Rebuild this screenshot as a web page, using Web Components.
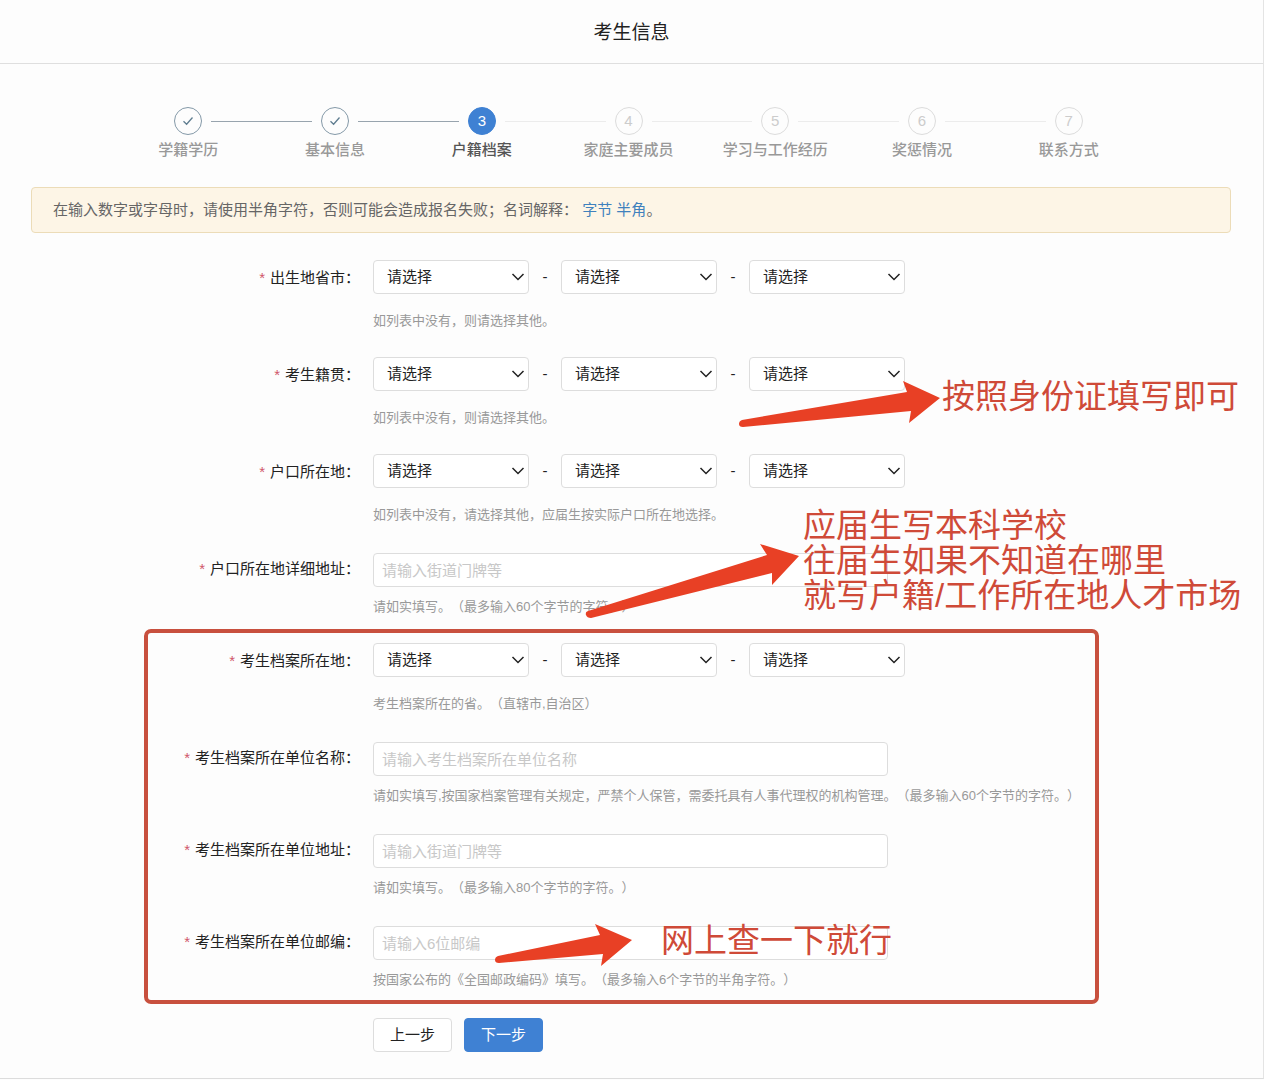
<!DOCTYPE html>
<html lang="zh-CN">
<head>
<meta charset="UTF-8">
<meta name="viewport" content="width=device-width, initial-scale=1.0">
<title>考生信息</title>
<style>
    body {
        margin: 0;
        background-color: #fdfdfd;
        color: #222;
        font-family: "Liberation Sans", "Noto Sans CJK SC", sans-serif;
        font-size: 15px;
        line-height: 20px;
        text-spacing-trim: space-all;
    }
</style>
</head>
<body>

<exam-page heading="考生信息">
    <step-bar current="3" steps="学籍学历,基本信息,户籍档案,家庭主要成员,学习与工作经历,奖惩情况,联系方式"></step-bar>

    <notice-bar>在输入数字或字母时，请使用半角字符，否则可能会造成报名失败；名词解释： <a href="#byte">字节</a> <a href="#half">半角</a>。</notice-bar>

    <region-field label="出生地省市" hint="如列表中没有，则请选择其他。"></region-field>
    <region-field label="考生籍贯" hint="如列表中没有，则请选择其他。"></region-field>
    <region-field label="户口所在地" hint="如列表中没有，请选择其他，应届生按实际户口所在地选择。"></region-field>
    <text-field label="户口所在地详细地址" placeholder="请输入街道门牌等" hint="请如实填写。（最多输入60个字节的字符。）"></text-field>
    <region-field label="考生档案所在地" hint="考生档案所在的省。（直辖市,自治区）"></region-field>
    <text-field label="考生档案所在单位名称" placeholder="请输入考生档案所在单位名称" hint="请如实填写,按国家档案管理有关规定，严禁个人保管，需委托具有人事代理权的机构管理。（最多输入60个字节的字符。）"></text-field>
    <text-field label="考生档案所在单位地址" placeholder="请输入街道门牌等" hint="请如实填写。（最多输入80个字节的字符。）"></text-field>
    <text-field label="考生档案所在单位邮编" placeholder="请输入6位邮编" hint="按国家公布的《全国邮政编码》填写。（最多输入6个字节的半角字符。）"></text-field>

    <form-actions></form-actions>

    <mark-layer slot="marks"></mark-layer>
</exam-page>

<script>
customElements.define('exam-page', class ExamPage extends HTMLElement {

    constructor() {
        super();
        this.attachShadow({ mode: "open" });
    }

    connectedCallback() {
        this.shadowRoot.innerHTML = `
            <style>
                :host {
                    display: block;
                    position: relative;
                    border-right: 1px solid #e4e4e4;
                    border-bottom: 1px solid #dcdcdc;
                }

                header {
                    padding: 19px 0 17px;
                    border-bottom: 1px solid #dfdfdf;
                    text-align: center;
                }

                h1 {
                    margin: 0;
                    font-size: 19px;
                    line-height: 27px;
                    font-weight: normal;
                }

                main {
                    padding-bottom: 26px;
                }
            </style>
            <header><h1>${this.getAttribute('heading')}</h1></header>
            <main><slot></slot></main>
            <slot name="marks"></slot>
        `;
    }

})

customElements.define('step-bar', class StepBar extends HTMLElement {

    constructor() {
        super();
        this.attachShadow({ mode: "open" });
    }

    connectedCallback() {
        this.current = Number(this.getAttribute('current'));
        this.steps = this.getAttribute('steps').split(',');
        this.shadowRoot.innerHTML = `
            ${this.templateCss()}
            <ol>${this.steps.map((name, i) => this.templateStep(name, i + 1)).join('')}</ol>
        `;
    }

    templateCss() {
        return /*html*/`
            <style>
                :host {
                    display: block;
                    padding: 43px 121px 27px 115px;
                }

                ol {
                    display: flex;
                    margin: 0;
                    padding: 0;
                    list-style: none;
                }

                li {
                    flex: 1 1 0;
                    color: #999;
                    text-align: center;
                }

                .track {
                    display: flex;
                    align-items: center;
                    gap: 9px;
                    margin-bottom: 5px;
                }

                .line {
                    flex: 1;
                    height: 1px;
                    background-color: #ececec;
                }

                .line.done {
                    background-color: #98a4ae;
                }

                .line.none {
                    background-color: transparent;
                }

                .dot {
                    display: flex;
                    align-items: center;
                    justify-content: center;
                    box-sizing: border-box;
                    width: 28px;
                    height: 28px;
                    border: 1px solid #dcdcdc;
                    border-radius: 50%;
                    color: #ccc;
                }

                .dot.done {
                    border-color: #8499a8;
                    color: #5f7d90;
                }

                .dot.active {
                    border-color: #3f81d3;
                    background-color: #3f81d3;
                    color: #fff;
                }

                .name {
                    font-weight: 500;
                }

                .name.active {
                    color: #555;
                }
            </style>
        `;
    }

    templateStep(name, n) {
        const state = n < this.current ? 'done' : n === this.current ? 'active' : '';
        const left = n === 1 ? 'none' : n <= this.current ? 'done' : '';
        const right = n === this.steps.length ? 'none' : n < this.current ? 'done' : '';
        const check = `
            <svg width="12" height="10" viewBox="0 0 12 10" fill="none" stroke="currentColor" stroke-width="1.3">
                <path d="M1.5 5.2 L4.6 8.2 L10.5 1.5"/>
            </svg>`;
        return /*html*/`
            <li>
                <div class="track">
                    <span class="line ${left}"></span>
                    <span class="dot ${state}">${state === 'done' ? check : n}</span>
                    <span class="line ${right}"></span>
                </div>
                <div class="name ${state}">${name}</div>
            </li>
        `;
    }

})

customElements.define('notice-bar', class NoticeBar extends HTMLElement {

    constructor() {
        super();
        this.attachShadow({ mode: "open" });
    }

    connectedCallback() {
        this.shadowRoot.innerHTML = `
            <style>
                :host {
                    display: block;
                    margin: 0 32px 27px 31px;
                    padding: 12px 21px;
                    border: 1px solid #ecdcb8;
                    border-radius: 4px;
                    background-color: #fdf5e6;
                    color: #666;
                }

                ::slotted(a) {
                    color: #3f81bd;
                    text-decoration: none;
                }
            </style>
            <slot></slot>
        `;
    }

})

// label column, control and hint; subclasses fill in the control
class FormField extends HTMLElement {

    constructor() {
        super();
        this.attachShadow({ mode: "open" });
    }

    connectedCallback() {
        this.shadowRoot.innerHTML = `
            ${this.templateCss()}
            <label for="control"><span class="star">*</span>${this.getAttribute('label')}：</label>
            <div class="body">
                ${this.template()}
                <div class="hint" id="hint">${this.getAttribute('hint')}</div>
            </div>
        `;
    }

    templateCss() {
        return /*html*/`
            <style>
                :host {
                    display: grid;
                    grid-template-columns: 360px 1fr;
                    column-gap: 13px;
                    margin-bottom: 26px;
                }

                label {
                    padding-top: 8px;
                    text-align: right;
                }

                .star {
                    margin-right: 5px;
                    color: #d0566a;
                }

                .hint {
                    color: #999;
                    font-size: 13px;
                }

                input, select {
                    box-sizing: border-box;
                    height: 34px;
                    margin: 0;
                    border: 1px solid #ddd;
                    border-radius: 4px;
                    background-color: #fff;
                    color: #222;
                    font: inherit;
                }

                .regions {
                    display: flex;
                    align-items: center;
                    margin-bottom: 17px;
                }

                .pick {
                    display: grid;
                    align-items: center;
                }

                .pick > * {
                    grid-area: 1 / 1;
                }

                .pick svg {
                    justify-self: end;
                    margin-right: 4px;
                    pointer-events: none;
                }

                select {
                    width: 156px;
                    padding: 0 24px 0 13px;
                    appearance: none;
                }

                .dash {
                    width: 32px;
                    text-align: center;
                }

                input {
                    display: block;
                    width: 100%;
                    max-width: 515px;
                    margin: 2px 0 10px;
                    padding: 0 8px;
                }

                input::placeholder {
                    color: #c8c8c8;
                }
            </style>
        `;
    }

}

customElements.define('region-field', class RegionField extends FormField {

    template() {
        return /*html*/`
            <div class="regions">
                ${this.templateSelect('id="control" aria-describedby="hint"')}
                <span class="dash">-</span>
                ${this.templateSelect('aria-label="市"')}
                <span class="dash">-</span>
                ${this.templateSelect('aria-label="区县"')}
            </div>
        `;
    }

    templateSelect(attrs) {
        return /*html*/`
            <span class="pick">
                <select ${attrs}><option>请选择</option></select>
                <svg width="14" height="10" viewBox="0 0 14 10" fill="none" stroke="#222" stroke-width="1.5">
                    <path d="M1.5 2 L7 7.5 L12.5 2"/>
                </svg>
            </span>
        `;
    }

})

customElements.define('text-field', class TextField extends FormField {

    template() {
        return /*html*/`
            <input id="control" type="text" aria-describedby="hint" placeholder="${this.getAttribute('placeholder')}">
        `;
    }

})

customElements.define('form-actions', class FormActions extends HTMLElement {

    constructor() {
        super();
        this.attachShadow({ mode: "open" });
    }

    connectedCallback() {
        this.shadowRoot.innerHTML = `
            <style>
                :host {
                    display: flex;
                    gap: 12px;
                    padding: 2px 0 0 373px;
                }

                button {
                    width: 79px;
                    height: 34px;
                    padding: 0;
                    border: 1px solid #ddd;
                    border-radius: 4px;
                    background-color: #fff;
                    color: #222;
                    font: inherit;
                    cursor: pointer;
                }

                .next {
                    border-color: #3f81d3;
                    background-color: #3f81d3;
                    color: #fff;
                }
            </style>
            <button type="button">上一步</button>
            <button type="button" class="next">下一步</button>
        `;
    }

})

// red notes drawn freely over the form
customElements.define('mark-layer', class MarkLayer extends HTMLElement {

    constructor() {
        super();
        this.attachShadow({ mode: "open" });
    }

    connectedCallback() {
        this.shadowRoot.innerHTML = `
            <style>
                :host {
                    position: absolute;
                    inset: 0;
                    overflow: hidden;
                    color: #cf4a38;
                    font-size: 33px;
                    line-height: 35px;
                    white-space: nowrap;
                    pointer-events: none;
                }

                svg {
                    position: absolute;
                    left: 0;
                    top: 0;
                    width: 100%;
                    height: 100%;
                }

                p {
                    position: absolute;
                    margin: 0;
                }

                .card { left: 942px; top: 379px; }
                .school { left: 803px; top: 508px; }
                .web { left: 661px; top: 923px; }
            </style>
            <svg aria-hidden="true">
                <rect x="146" y="631" width="951" height="371" rx="5" fill="none" stroke="#c8503e" stroke-width="4"/>
                <g fill="#e84025">
                    <path d="M742 420 L907 392 L903 381 L940 398 L909 423 L911 411 L743 427 Q739 427 739 424 Q739 421 742 420 Z"/>
                    <path d="M588 611 L767 555 L760 544 L799 556 L772 585 L772 573 L591 618 Q587 618 586 615 Q585 612 588 611 Z"/>
                    <path d="M498 956 L600 935 L595 924 L632 940 L601 966 L603 954 L499 963 Q495 963 495 960 Q495 957 498 956 Z"/>
                </g>
            </svg>
            <p class="card">按照身份证填写即可</p>
            <p class="school">应届生写本科学校<br>往届生如果不知道在哪里<br>就写户籍/工作所在地人才市场</p>
            <p class="web">网上查一下就行</p>
        `;
    }

})
</script>
</body>
</html>
